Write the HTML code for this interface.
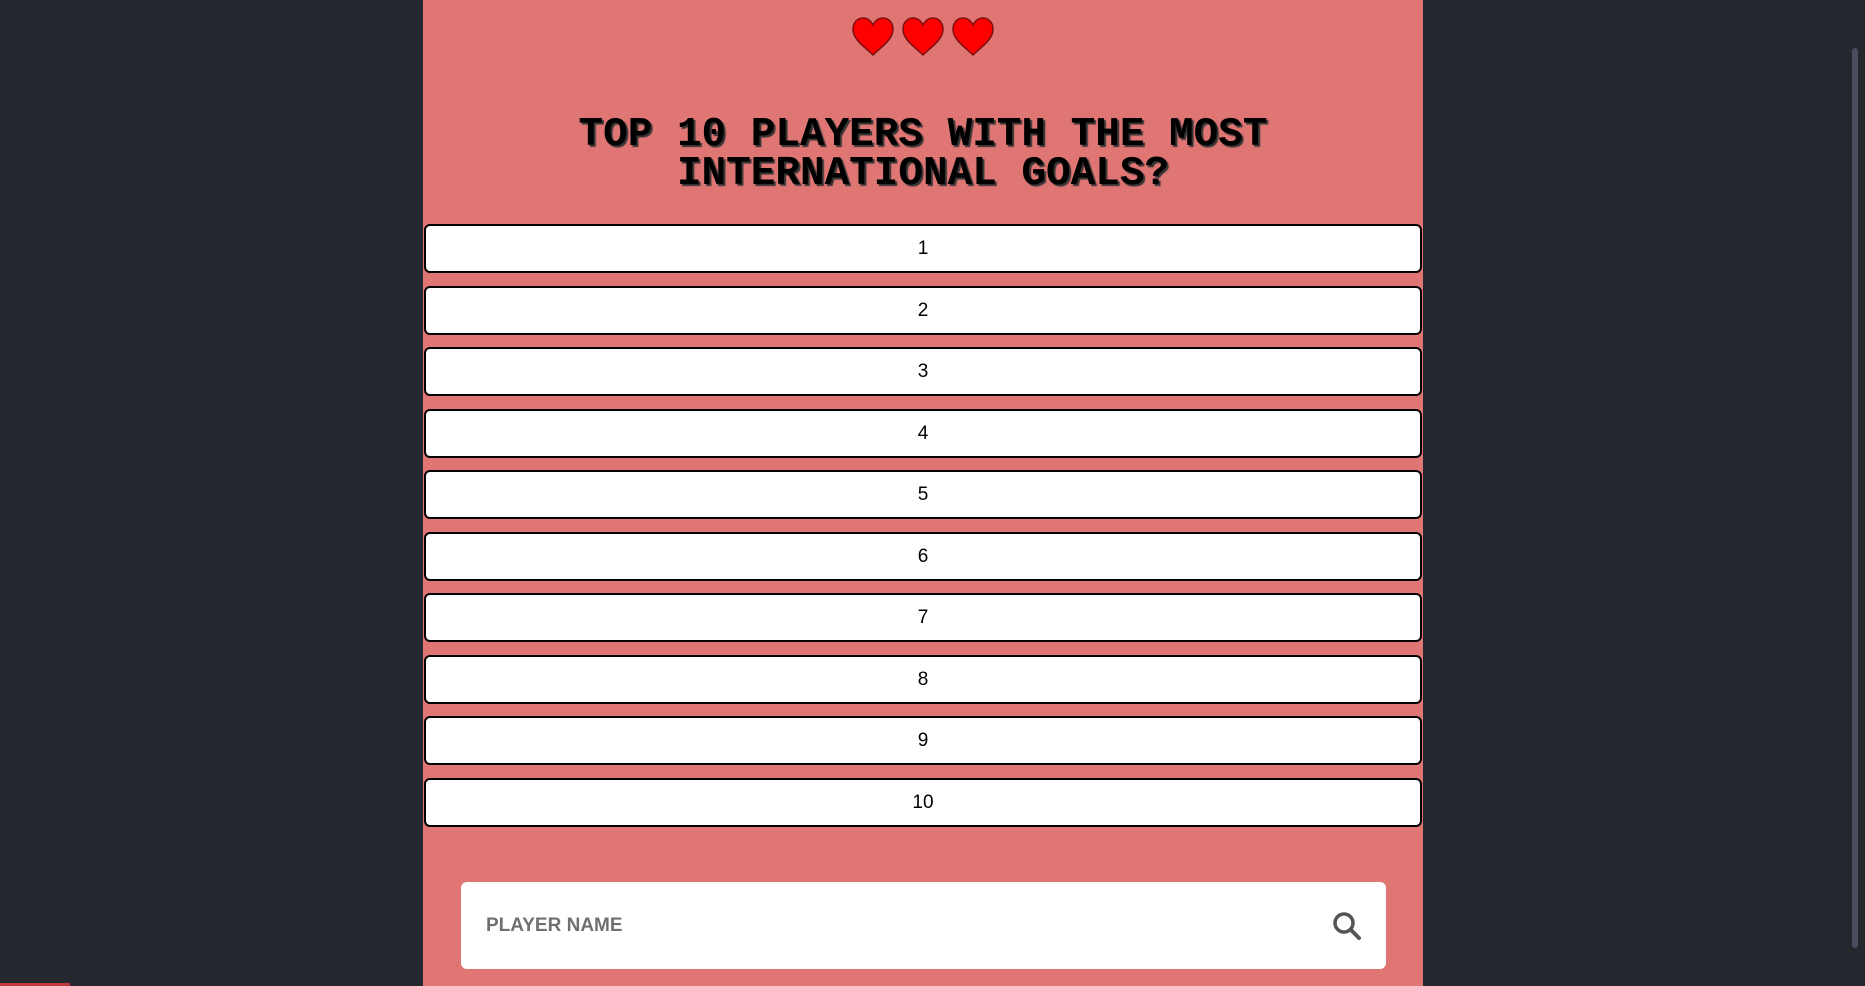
<!DOCTYPE html>
<html><head><meta charset="utf-8"><style>
html,body{margin:0;padding:0;}
body{width:1865px;height:986px;background:#24272e;position:relative;overflow:hidden;font-family:"Liberation Sans",sans-serif;}
#panel{position:absolute;left:423px;top:0;width:1000px;height:986px;background:#df7674;}
.hearts{position:absolute;top:17px;left:0;width:1000px;text-align:center;font-size:0;}
.hearts svg{margin:0 3px;}
h1{position:absolute;top:116px;left:0;width:1000px;margin:0;text-align:center;font-family:"Liberation Mono",monospace;font-weight:bold;font-size:41px;line-height:39px;color:#000;text-shadow:2px 2px 1px #333;}
.box{position:absolute;left:1px;width:994px;height:45px;background:#fff;border:2px solid #000;border-radius:6px;text-align:center;line-height:45px;font-size:19px;color:#000;}
.search{position:absolute;left:38px;top:882px;width:925px;height:87px;background:#fff;border-radius:6px;}
.search span{position:absolute;left:25px;top:0;line-height:87px;font-weight:bold;font-size:19px;color:#707070;}
.search svg{position:absolute;right:24px;top:29px;}
#sb{position:absolute;left:1852px;top:48px;width:6px;height:900px;background:#4a4d60;border-radius:3px;}
</style></head><body>
<div id="panel">
<div class="hearts">
<svg width="44" height="40" viewBox="0 0 44 40"><path d="M22 38 C14 30 2 23 2 12 C2 5 7 1 12 1 C17 1 20 4 22 8 C24 4 27 1 32 1 C37 1 42 5 42 12 C42 23 30 30 22 38Z" fill="#f00" stroke="#7a1010" stroke-width="1.5"/></svg><svg width="44" height="40" viewBox="0 0 44 40"><path d="M22 38 C14 30 2 23 2 12 C2 5 7 1 12 1 C17 1 20 4 22 8 C24 4 27 1 32 1 C37 1 42 5 42 12 C42 23 30 30 22 38Z" fill="#f00" stroke="#7a1010" stroke-width="1.5"/></svg><svg width="44" height="40" viewBox="0 0 44 40"><path d="M22 38 C14 30 2 23 2 12 C2 5 7 1 12 1 C17 1 20 4 22 8 C24 4 27 1 32 1 C37 1 42 5 42 12 C42 23 30 30 22 38Z" fill="#f00" stroke="#7a1010" stroke-width="1.5"/></svg>
</div>
<h1>TOP 10 PLAYERS WITH THE MOST<br>INTERNATIONAL GOALS?</h1>
<div class="box" style="top:224px">1</div>
<div class="box" style="top:286px">2</div>
<div class="box" style="top:347px">3</div>
<div class="box" style="top:409px">4</div>
<div class="box" style="top:470px">5</div>
<div class="box" style="top:532px">6</div>
<div class="box" style="top:593px">7</div>
<div class="box" style="top:655px">8</div>
<div class="box" style="top:716px">9</div>
<div class="box" style="top:778px">10</div>
<div class="search"><span>PLAYER NAME</span>
<svg width="30" height="30" viewBox="0 0 30 30"><circle cx="12" cy="12" r="9" fill="none" stroke="#555" stroke-width="3.5"/><line x1="18.5" y1="18.5" x2="27" y2="27" stroke="#555" stroke-width="4" stroke-linecap="round"/></svg>
</div>
</div>
<div id="sb"></div>
<div style="position:absolute;left:0;top:983px;width:70px;height:3px;background:#c0393b"></div>
</body></html>
